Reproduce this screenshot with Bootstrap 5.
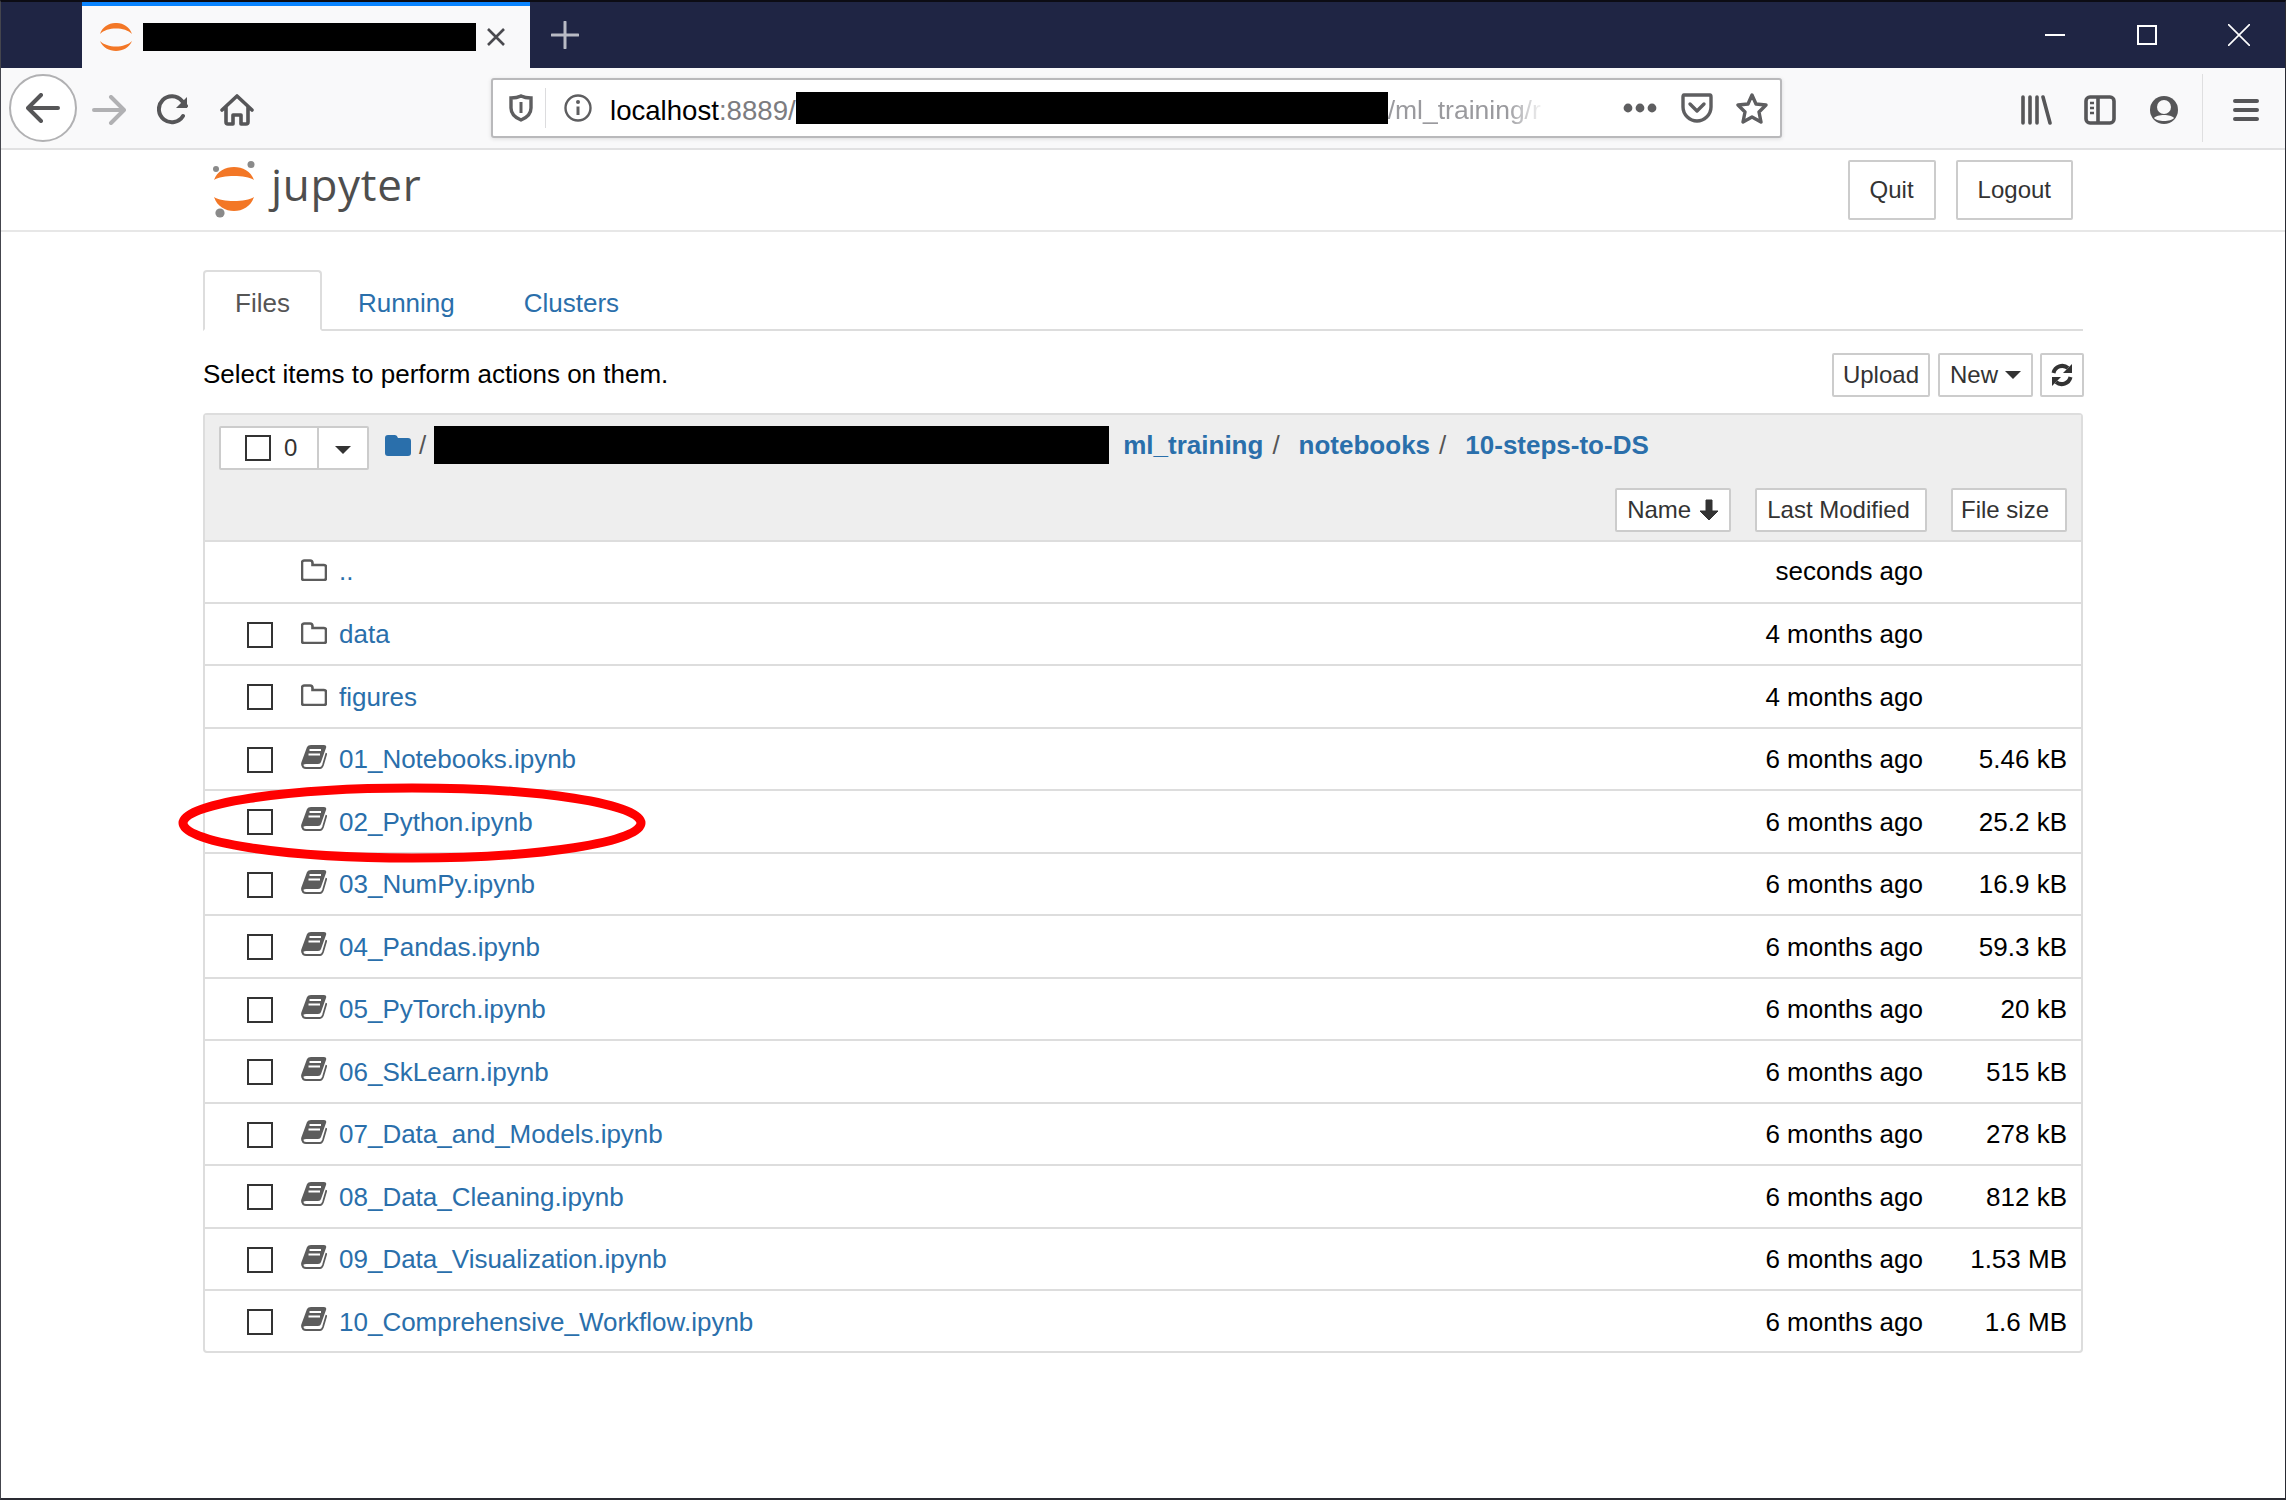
<!DOCTYPE html>
<html lang="en">
<head>
  <meta charset="UTF-8" />
  <meta name="viewport" content="width=device-width, initial-scale=1.0"/>
  <title>Jupyter file list</title>
  <link href="https://cdn.jsdelivr.net/npm/bootstrap@5.3.0/dist/css/bootstrap.min.css" rel="stylesheet"/>
  <style>
    html, body { height: 100%; }
    body { background: #fff; color: #000; font-family: "Liberation Sans", Arial, sans-serif; font-size: 26px; overflow: hidden; }
    a { text-decoration: none; }
    .window-frame { position: relative; height: 1500px; border-top: 2px solid #0c0c14; border-left: 1px solid #44454d; border-right: 1px solid #2a2b33; border-bottom: 2px solid #2a2b33; }

    /* browser chrome */
    .title-strip { height: 66px; background: #1f2544; padding-left: 81px; }
    .browser-tab { width: 448px; background: #f9f9fa; border-top: 4px solid #0a84ff; padding-left: 18px; }
    .redact { background: #000; flex: none; }
    .tab-redact { width: 333px; height: 28px; margin-left: 11px; }
    .tab-close { margin-left: 10px; }
    .new-tab { margin-left: 21px; }
    .win-btn { width: 92px; }
    .win-btn svg { display: block; margin: 0 auto; }
    .tool-strip { height: 82px; background: #f9f9fa; border-bottom: 2px solid #e1e1e2; }
    .back-circle { width: 68px; height: 68px; margin-left: 8px; border: 2px solid #b1b1b3; border-radius: 50%; background: #fff; flex: none; }
    .tool-ico { width: 64px; }
    .url-box { width: 1291px; height: 60px; margin-left: 222px; margin-right: 222px; background: #fff; border: 2px solid #b9b9bb; border-radius: 3px; box-shadow: 0 1px 4px rgba(0,0,0,.12); font-size: 26px; white-space: nowrap; flex: none; }
    .url-sep { width: 1px; height: 40px; background: #dcdcde; margin: 0 18px 0 12px; }
    .url-host { color: #000; margin-left: 18px; padding-top: 5px; font-size: 27.6px; }
    .url-grey { color: #7c7c80; }
    .url-redact { width: 592px; height: 32px; }
    .url-fade { color: #9a9a9e; width: 158px; overflow: hidden; padding-top: 5px; font-size: 26.5px; -webkit-mask-image: linear-gradient(90deg, #000 75%, transparent); mask-image: linear-gradient(90deg, #000 75%, transparent); }
    .url-ends { margin-right: 12px; }
    .url-pocket { margin: 0 23px 0 24px; }
    .tool-sep { width: 1px; height: 68px; background: #dfdfe0; margin-left: 6px; }
    .menu-ico { margin-left: 11px; }

    /* jupyter header */
    .page-wrap { width: 1880px; margin-left: 202px; }
    .head-strip { height: 82px; border-bottom: 2px solid #e7e7e7; }
    .logo-word { font-family: "Open Sans", sans-serif; font-size: 44px; line-height: 1; color: #4e4e4e; margin-left: 14px; margin-top: -12px; letter-spacing: .7px; }
    .top-btns { gap: 20px; margin-right: 10px; }
    .top-btn { height: 60px; padding: 0 20px; font-size: 24px; color: #333; background: #fff; border: 2px solid #ccc; border-radius: 2px; }
    .small-btn { height: 44px; padding: 0 10px; font-size: 24px; color: #333; background: #fff; border: 2px solid #ccc; border-radius: 2px; }

    .file-tabs { margin-top: 38px; border-bottom: 2px solid #ddd; height: 61px; }
    .file-tabs .nav-link { height: 61px; padding: 16px 30px 0; font-size: 26px; line-height: 30px; color: #2a6fab; border: 2px solid transparent; border-radius: 4px 4px 0 0; margin-bottom: -2px; }
    .file-tabs .nav-link.active { color: #555; background: #fff; border-color: #ddd #ddd #fff; }
    .file-tabs .nav-item + .nav-item .nav-link { padding-left: 34px; padding-right: 0; margin-right: 31px; }
    .action-row { height: 44px; margin-top: 22px; margin-bottom: 16px; }
    .select-note { margin-top: -2px; }
    .action-btns { margin-right: -1px; }
    .btn-upload { margin-right: 8px; padding: 0 9px; }
    .btn-new { margin-right: 7px; gap: 7px; }
    .btn-sync { padding: 0 9px; }

    .tree-panel { border: 2px solid #ddd; border-radius: 4px; }
    .tree-head { height: 127px; background: #eee; padding: 11px 14px 0 14px; border-bottom: 2px solid #ddd; }
    .count-group { width: 150px; height: 44px; background: #fff; border: 2px solid #ccc; border-radius: 2px; }
    .count-main { width: 98px; border-right: 2px solid #ccc; padding-left: 24px; gap: 13px; }
    .fake-check { width: 26px; height: 26px; border: 2px solid #333; background: #fff; flex: none; display: block; }
    .count-num { color: #333; font-size: 24px; line-height: 1; }
    .caret-down { width: 0; height: 0; border-left: 8px solid transparent; border-right: 8px solid transparent; border-top: 8px solid #333; display: inline-block; }
    .crumb-row { height: 44px; font-size: 26px; color: #555; }
    .crumb-row a { color: #2a6fab; font-weight: 700; }
    .crumb-inner { margin-bottom: 6px; }
    .crumb-redact { width: 675px; height: 38px; margin: 0 14px 0 8px; }
    .crumb-sep { margin: 0 11px 0 9px; }
    .sort-row { margin-top: 18px; gap: 24px; }
    .sort-btn { padding: 0 15px 0 10px; }
    .sort-size { padding: 0 16px 0 8px; }
    .sort-name { padding: 0 10px; gap: 8px; }
    .file-row { height: 62.5px; border-bottom: 2px solid #ddd; padding: 2px 14px 0 42px; }
    .file-row:first-child { height: 61.5px; padding-top: 0; }
    .file-row:last-child { border-bottom: 0; height: 60px; }
    .file-name { color: #2a6fab; margin-left: 12px; white-space: nowrap; }
    .row-ico { margin-left: 28px; flex: none; display: block; }
    .folder-ico { margin-bottom: 4px; }
    .book-ico { margin-bottom: 6px; }
    .check-gap { width: 26px; height: 26px; flex: none; }
    .file-date { width: 400px; margin-left: auto; text-align: right; margin-right: 144px; white-space: nowrap; }
    .file-size { width: 140px; margin-left: -140px; text-align: right; white-space: nowrap; }
    .red-ring { position: absolute; left: 177px; top: 781px; width: 468px; height: 80px; pointer-events: none; }
  </style>
</head>
<body class="m-0">
<div class="window-frame">

  <!-- title bar -->
  <div class="title-strip d-flex align-items-stretch">
    <div class="browser-tab d-flex align-items-center">
      <svg width="32" height="28" viewBox="0 0 32 28"><path d="M0 11C5 -3.700 27 -3.700 32 11C25 3.700 7 3.700 0 11Z M0 18C7 25.300 25 25.300 32 18C27 31.300 5 31.300 0 18Z" fill="#f37726"/></svg>
      <div class="redact tab-redact"></div>
      <svg class="tab-close" width="20" height="20" viewBox="0 0 20 20"><path d="M2 2L18 18M18 2L2 18" stroke="#4a4a4f" stroke-width="2.6"/></svg>
    </div>
    <div class="new-tab d-flex align-items-center">
      <svg width="28" height="28" viewBox="0 0 28 28"><path d="M14 1V27M1 14H27" stroke="#b8bac4" stroke-width="3" stroke-linecap="round"/></svg>
    </div>
    <div class="ms-auto d-flex align-items-center">
      <div class="win-btn"><svg width="20" height="20" viewBox="0 0 20 20"><path d="M0 10H20" stroke="#fff" stroke-width="2"/></svg></div>
      <div class="win-btn"><svg width="20" height="20" viewBox="0 0 20 20"><rect x="1" y="1" width="18" height="18" fill="none" stroke="#fff" stroke-width="2"/></svg></div>
      <div class="win-btn"><svg width="22" height="22" viewBox="0 0 22 22"><path d="M0 0L22 22M22 0L0 22" stroke="#fff" stroke-width="1.6"/></svg></div>
    </div>
  </div>

  <!-- toolbar -->
  <div class="tool-strip d-flex align-items-center">
    <div class="back-circle d-flex align-items-center justify-content-center">
      <svg width="34" height="30" viewBox="0 0 34 30"><path d="M32 15H3M15 2L2 15L15 28" fill="none" stroke="#565658" stroke-width="4" stroke-linecap="round" stroke-linejoin="round"/></svg>
    </div>
    <div class="tool-ico text-center">
      <svg width="34" height="30" viewBox="0 0 34 30"><path d="M2 15H31M19 2L32 15L19 28" fill="none" stroke="#b1b1b3" stroke-width="4" stroke-linecap="round" stroke-linejoin="round"/></svg>
    </div>
    <div class="tool-ico text-center">
      <svg width="32" height="32" viewBox="0 0 32 32"><path d="M26 22A13 13 0 1 1 25 7L29 12" fill="none" stroke="#565658" stroke-width="4" stroke-linecap="round"/><path d="M30 3V14H19Z" fill="#565658"/></svg>
    </div>
    <div class="tool-ico text-center">
      <svg width="34" height="32" viewBox="0 0 34 32"><path d="M2 16L17 2L32 16M6 13V28Q6 30 8 30H13V21H21V30H26Q28 30 28 28V13" fill="none" stroke="#565658" stroke-width="3.6" stroke-linecap="round" stroke-linejoin="round"/></svg>
    </div>
    <div class="url-box d-flex align-items-center">
      <svg class="ms-3" width="24" height="28" viewBox="0 0 24 28"><path d="M12 2C8 4 5 4 2 4V14C2 20 7 24 12 26C17 24 22 20 22 14V4C19 4 16 4 12 2Z" fill="none" stroke="#5e5e60" stroke-width="3.4"/><path d="M12 8V19" stroke="#5e5e60" stroke-width="3"/></svg>
      <div class="url-sep"></div>
      <svg width="28" height="28" viewBox="0 0 28 28"><circle cx="14" cy="14" r="12.5" fill="none" stroke="#5e5e60" stroke-width="2.4"/><path d="M14 12.5V21" stroke="#5e5e60" stroke-width="3"/><circle cx="14" cy="8" r="2" fill="#5e5e60"/></svg>
      <span class="url-host">localhost<span class="url-grey">:8889/</span></span>
      <div class="redact url-redact"></div>
      <div class="url-fade url-grey">/ml_training/r</div>
      <div class="d-flex align-items-center ms-auto url-ends">
        <svg width="34" height="10" viewBox="0 0 34 10"><circle cx="5" cy="5" r="4.4" fill="#5e5e60"/><circle cx="17" cy="5" r="4.4" fill="#5e5e60"/><circle cx="29" cy="5" r="4.4" fill="#5e5e60"/></svg>
        <svg class="url-pocket" width="32" height="30" viewBox="0 0 32 30"><path d="M3 2H29Q30 2 30 4V14C30 22 23 28 16 28C9 28 2 22 2 14V4Q2 2 3 2Z" fill="none" stroke="#5e5e60" stroke-width="3.4"/><path d="M9 11L16 18L23 11" fill="none" stroke="#5e5e60" stroke-width="3.4" stroke-linecap="round" stroke-linejoin="round"/></svg>
        <svg width="32" height="32" viewBox="0 0 32 32"><path d="M16 3L20 12L30 13L23 20L25 30L16 25L7 30L9 20L2 13L12 12Z" fill="none" stroke="#5e5e60" stroke-width="3.4" stroke-linejoin="round"/></svg>
      </div>
    </div>
    <div class="tool-ico text-center">
      <svg width="32" height="30" viewBox="0 0 32 30"><path d="M3 2V28M10 2V28M17 2V28M23 2L30 28" fill="none" stroke="#565658" stroke-width="3.6" stroke-linecap="round"/></svg>
    </div>
    <div class="tool-ico text-center">
      <svg width="32" height="30" viewBox="0 0 32 30"><rect x="2" y="2" width="28" height="26" rx="4" fill="none" stroke="#565658" stroke-width="3.6"/><path d="M14 2V28" stroke="#565658" stroke-width="3.6"/><path d="M6 8H10M6 13H10M6 18H10" stroke="#565658" stroke-width="2.6"/></svg>
    </div>
    <div class="tool-ico text-center">
      <svg width="30" height="30" viewBox="0 0 30 30"><circle cx="15" cy="15" r="14" fill="#565658"/><circle cx="15" cy="12" r="7" fill="#f9f9fa"/><path d="M5 23C8 19 22 19 25 23C22 27 8 27 5 23Z" fill="#f9f9fa"/></svg>
    </div>
    <div class="tool-sep"></div>
    <div class="tool-ico text-center menu-ico">
      <svg width="26" height="24" viewBox="0 0 26 24"><path d="M2 3H24M2 12H24M2 21H24" stroke="#565658" stroke-width="4" stroke-linecap="round"/></svg>
    </div>
  </div>

  <!-- jupyter header -->
  <div class="head-strip">
    <div class="page-wrap d-flex align-items-center h-100">
      <svg class="ms-2" width="46" height="58" viewBox="0 0 46 58"><path d="M3 19C9 1.700 37 1.700 43 19C35 13.700 11 13.700 3 19Z M3 36C11 41.300 35 41.300 43 36C37 54.700 9 54.700 3 36Z" fill="#f37726"/><circle cx="5" cy="8" r="3" fill="#8a8a8a"/><circle cx="40" cy="3.500" r="3.500" fill="#8a8a8a"/><circle cx="9" cy="52" r="4.600" fill="#8a8a8a"/></svg>
      <span class="logo-word">jupyter</span>
      <div class="ms-auto d-flex top-btns">
        <button class="btn top-btn" type="button">Quit</button>
        <button class="btn top-btn" type="button">Logout</button>
      </div>
    </div>
  </div>

  <div class="page-wrap">
    <ul class="nav nav-tabs file-tabs">
      <li class="nav-item"><a class="nav-link active" href="#">Files</a></li>
      <li class="nav-item"><a class="nav-link" href="#">Running</a></li>
      <li class="nav-item"><a class="nav-link" href="#">Clusters</a></li>
    </ul>

    <div class="action-row d-flex align-items-center">
      <span class="select-note">Select items to perform actions on them.</span>
      <div class="ms-auto d-flex align-items-center action-btns">
        <button class="btn small-btn btn-upload" type="button">Upload</button>
        <button class="btn small-btn btn-new d-inline-flex align-items-center" type="button">New <span class="caret-down"></span></button>
        <button class="btn small-btn btn-sync" type="button" aria-label="Refresh">
          <svg width="22" height="24" viewBox="0 0 22 24" class="d-block"><path d="M2.500 10A9 9 0 0 1 17 5" fill="none" stroke="#333" stroke-width="4"/><path d="M21 1V10H12Z" fill="#333"/><path d="M19.500 14A9 9 0 0 1 5 19" fill="none" stroke="#333" stroke-width="4"/><path d="M1 23V14H10Z" fill="#333"/></svg>
        </button>
      </div>
    </div>

    <div class="tree-panel">
      <div class="tree-head">
        <div class="d-flex crumb-row align-items-center">
          <div class="count-group d-flex me-3">
            <div class="count-main d-flex align-items-center"><span class="fake-check"></span><span class="count-num">0</span></div>
            <div class="flex-grow-1 d-flex align-items-center justify-content-center"><span class="caret-down mt-1"></span></div>
          </div>
          <div class="d-flex align-items-center crumb-inner">
            <svg width="26" height="21" viewBox="0 0 26 21"><path d="M3 0H10Q12 0 13 3H23Q26 3 26 6V18Q26 21 23 21H3Q0 21 0 18V3Q0 0 3 0Z" fill="#2a6fab"/></svg>
            <span class="ms-2">/</span>
            <div class="redact crumb-redact"></div>
            <a href="#">ml_training</a><span class="crumb-sep">/</span>
            <a class="ms-2" href="#">notebooks</a><span class="crumb-sep">/</span>
            <a class="ms-2" href="#">10-steps-to-DS</a>
          </div>
        </div>
        <div class="sort-row d-flex justify-content-end">
          <button class="btn small-btn sort-name d-inline-flex align-items-center" type="button">Name
            <svg width="20" height="22" viewBox="0 0 20 22"><path d="M7 1H13V12H19L10 21L1 12H7Z" fill="#333" stroke="#333" stroke-linejoin="round"/></svg>
          </button>
          <button class="btn small-btn sort-btn" type="button">Last Modified</button>
          <button class="btn small-btn sort-size" type="button">File size</button>
        </div>
      </div>
      <div id="fileRows"></div>
    </div>
  </div>

  <svg class="red-ring" viewBox="0 0 468 80"><ellipse cx="234" cy="40" rx="229" ry="35" fill="none" stroke="#f00" stroke-width="9"/></svg>
</div>

<script>
  // rows of the file list
  const folderIcon = '<svg class="row-ico folder-ico" width="26" height="22" viewBox="0 0 26 22"><path d="M3.500 1.500H9Q11.500 1.500 11.500 4V6H23Q25 6 25 8V19Q25 21 23 21H3Q1 21 1 19V4Q1 1.500 3.500 1.500Z" fill="none" stroke="#5c5c5c" stroke-width="2.600"/></svg>';
  const bookIcon = '<svg class="row-ico book-ico" width="26" height="24" viewBox="0 0 26 24"><path d="M6 2Q7 0 10 0H23Q26 0 25 3L20 17Q19.500 19 17 19H5Q2 19 2 21Q2 22 1 21Q-.5 20 .5 17Z" fill="#5c5c5c"/><path d="M1.500 20Q1.500 23 5 23H19Q21 23 22 20L25.500 8" fill="none" stroke="#5c5c5c" stroke-width="1.800"/><path d="M8.500 5H20M7.500 9.500H19" stroke="#fff" stroke-width="2"/></svg>';
  const files = [
    ["..", "seconds ago", "", "folder", false],
    ["data", "4 months ago", "", "folder", true],
    ["figures", "4 months ago", "", "folder", true],
    ["01_Notebooks.ipynb", "6 months ago", "5.46 kB", "book", true],
    ["02_Python.ipynb", "6 months ago", "25.2 kB", "book", true],
    ["03_NumPy.ipynb", "6 months ago", "16.9 kB", "book", true],
    ["04_Pandas.ipynb", "6 months ago", "59.3 kB", "book", true],
    ["05_PyTorch.ipynb", "6 months ago", "20 kB", "book", true],
    ["06_SkLearn.ipynb", "6 months ago", "515 kB", "book", true],
    ["07_Data_and_Models.ipynb", "6 months ago", "278 kB", "book", true],
    ["08_Data_Cleaning.ipynb", "6 months ago", "812 kB", "book", true],
    ["09_Data_Visualization.ipynb", "6 months ago", "1.53 MB", "book", true],
    ["10_Comprehensive_Workflow.ipynb", "6 months ago", "1.6 MB", "book", true]
  ];
  let html = "";
  files.forEach(function (f) {
    html += '<div class="file-row d-flex align-items-center">'
      + (f[4] ? '<span class="fake-check"></span>' : '<span class="check-gap"></span>')
      + (f[3] === "folder" ? folderIcon : bookIcon)
      + '<a class="file-name" href="#">' + f[0] + '</a>'
      + '<span class="file-date">' + f[1] + '</span>'
      + '<span class="file-size">' + f[2] + '</span>'
      + '</div>';
  });
  document.getElementById("fileRows").innerHTML = html;
</script>
<script src="https://cdn.jsdelivr.net/npm/bootstrap@5.3.0/dist/js/bootstrap.bundle.min.js"></script>
</body>
</html>
